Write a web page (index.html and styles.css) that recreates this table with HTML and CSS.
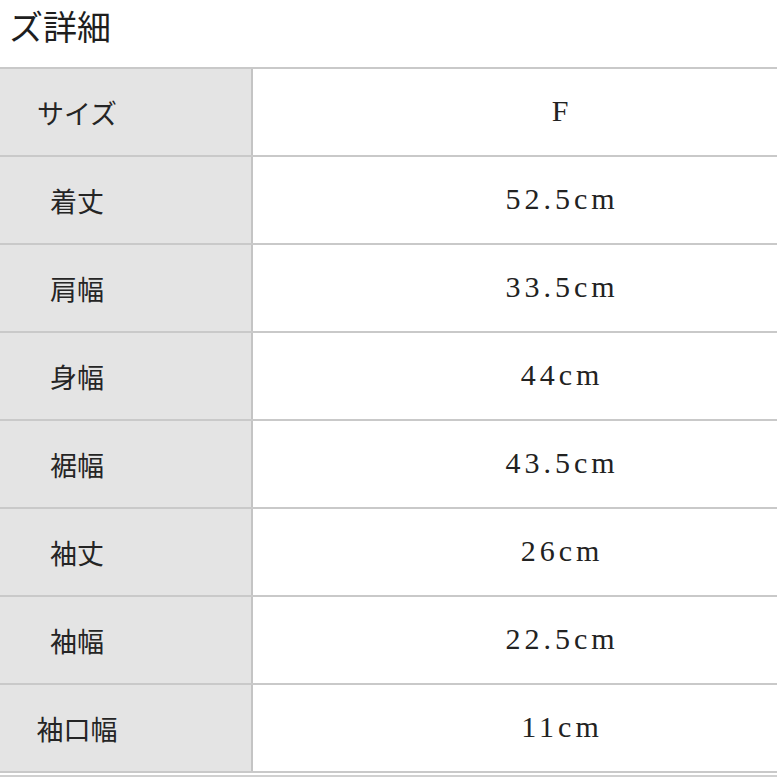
FILE: index.html
```html
<!DOCTYPE html>
<html lang="ja">
<head>
<meta charset="utf-8">
<title>サイズ詳細</title>
<link rel="stylesheet" href="styles.css">
</head>
<body>
<div class="page">
  <h2 class="title">ズ詳細</h2>
  <div class="size-table">
    <div class="row"><div class="label">サイズ</div><div class="value">F</div></div>
    <div class="row"><div class="label">着丈</div><div class="value">52.5cm</div></div>
    <div class="row"><div class="label">肩幅</div><div class="value">33.5cm</div></div>
    <div class="row"><div class="label">身幅</div><div class="value">44cm</div></div>
    <div class="row"><div class="label">裾幅</div><div class="value">43.5cm</div></div>
    <div class="row"><div class="label">袖丈</div><div class="value">26cm</div></div>
    <div class="row"><div class="label">袖幅</div><div class="value">22.5cm</div></div>
    <div class="row"><div class="label">袖口幅</div><div class="value">11cm</div></div>
  </div>
  <div class="next-line"></div>
</div>
</body>
</html>
```

FILE: styles.css
```css
html, body {
  margin: 0;
  padding: 0;
  background: #ffffff;
}
.page {
  width: 777px;
  height: 777px;
  overflow: hidden;
  color: #222222;
  font-family: "Noto Sans CJK JP", "Liberation Serif", serif;
}
.title {
  margin: 0;
  height: 67px;
  padding-left: 9px;
  font-size: 34px;
  font-weight: 400;
  line-height: 52px;
  color: #1e1e1e;
}
.size-table {
  display: flex;
  flex-direction: column;
}
.row {
  display: grid;
  grid-template-columns: 251px 2px 1fr;
  height: 86px;
  border-top: 2px solid #c9c9c9;
}
.row:last-child {
  border-bottom: 2px solid #c9c9c9;
}
.row::before {
  content: "";
  grid-column: 2;
  grid-row: 1;
  background: #c4c4c4;
}
.label {
  grid-column: 1;
  grid-row: 1;
  background: #e4e4e4;
  display: flex;
  align-items: center;
  justify-content: center;
  padding-right: 97px;
  font-family: "Noto Sans CJK JP", sans-serif;
  font-size: 27px;
  font-weight: 400;
  color: #252525;
}
.value {
  grid-column: 3;
  grid-row: 1;
  display: flex;
  align-items: center;
  justify-content: center;
  padding-left: 90px;
  padding-bottom: 2px;
  font-family: "Liberation Serif", "Noto Sans CJK JP", serif;
  font-size: 30px;
  letter-spacing: 4px;
  text-indent: 4px;
  color: #222222;
}
.next-line {
  margin-top: 2px;
  height: 2px;
  background: #d0d0d0;
}
```
